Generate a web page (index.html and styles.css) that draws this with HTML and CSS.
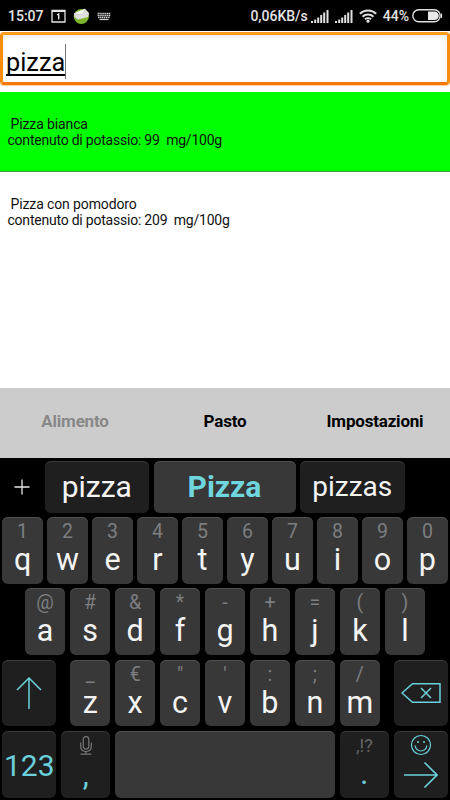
FILE: index.html
```html
<!DOCTYPE html>
<html lang="it">
<head>
    <meta charset="UTF-8">
    <meta name="viewport" content="width=device-width, initial-scale=1.0">
    <title>Potassio</title>
    <link rel="stylesheet" href="styles.css">
</head>
<body>
    <div class="status-bar">
        <span class="clock">15:07</span>
        <svg class="icon-calendar" width="15" height="14" viewBox="0 0 15 14">
            <path d="M1 1.500h13v11.500H1z" fill="none" stroke="#e4e4e4" stroke-width="1.300"/>
            <path d="M1 2h13" stroke="#e4e4e4" stroke-width="2"/>
            <path d="M6 6l1.700-1v5.500" fill="none" stroke="#e4e4e4" stroke-width="1.400"/>
        </svg>
        <svg class="icon-mail" width="17" height="17" viewBox="0 0 17 17">
            <circle cx="8.300" cy="8.500" r="7.600" fill="#7fb52c"/>
            <path d="M1 5.500L12 .8l4 4.200-.8 4L5 11.500 1.500 9z" fill="#dedede"/>
            <path d="M1 5.500l8.500 1.200L12 .8" fill="#f8f8f8" stroke="#c4c4c4" stroke-width=".6"/>
        </svg>
        <svg class="icon-keyboard" width="14" height="9" viewBox="0 0 14 9">
            <path d="M.5 1.500h13M.5 3.500h13M1 5.500h12" stroke="#d0d0d0" stroke-width="1.300" stroke-dasharray="1.400 .5"/>
            <path d="M2.500 7.500h9" stroke="#d0d0d0" stroke-width="1.200"/>
        </svg>

        <span class="speed">0,06KB/s</span>
        <svg class="icon-signal" width="18" height="13" viewBox="0 0 18 13">
            <path d="M0 13v-2h2v2zM3.200 13V9.500h2V13zM6.200 13V7.500h2V13zM9.200 13V5h2v8zM12.200 13V2.500h2V13zM15.500 13V0h2v13z" fill="#e0e0e0"/>
        </svg>
        <svg class="icon-signal second" width="18" height="13" viewBox="0 0 18 13">
            <path d="M0 13v-2h2v2zM3.200 13V9.500h2V13zM6.200 13V7.500h2V13zM9.200 13V5h2v8zM12.200 13V2.500h2V13zM15.500 13V0h2v13z" fill="#e0e0e0"/>
        </svg>
        <svg class="icon-wifi" width="18" height="14" viewBox="0 0 18 14">
            <path d="M.8 4.800a11.800 11.800 0 0 1 16.400 0M3.500 7.700a8 8 0 0 1 11 0M6 10.300a4.400 4.400 0 0 1 6 0" fill="none" stroke="#e0e0e0" stroke-width="1.900"/>
            <circle cx="9" cy="12.200" r="1.600" fill="#e0e0e0"/>
        </svg>
        <span class="percent">44%</span>
        <svg class="icon-battery" width="31" height="14" viewBox="0 0 31 14">
            <rect x=".8" y=".8" width="27.400" height="12" rx="6" fill="none" stroke="#e0e0e0" stroke-width="1.400"/>
            <path d="M16 2.500h6.500a4.300 4.300 0 0 1 0 8.600H16z" fill="#e8e8e8"/>
            <path d="M29.500 4.500v4.500" stroke="#e0e0e0" stroke-width="1.200"/>
        </svg>
    </div>

    <div class="search-box"><span class="search-text">pizza</span></div>

    <div class="results">
        <div class="result selected">
            <p class="name">Pizza bianca</p>
            <p>contenuto di potassio: 99&nbsp; mg/100g</p>
        </div>
        <div class="result">
            <p class="name">Pizza con pomodoro</p>
            <p>contenuto di potassio: 209&nbsp; mg/100g</p>
        </div>
    </div>

    <div class="tabs">
        <div class="tab disabled">Alimento</div>
        <div class="tab">Pasto</div>
        <div class="tab">Impostazioni</div>
    </div>

    <div class="keyboard">
        <div class="suggestions">
            <svg class="icon-plus" width="16" height="16" viewBox="0 0 16 16">
                <path d="M8 .5v15M.5 8h15" stroke="#e8e8e8" stroke-width="1.300"/>
            </svg>
            <div class="key dark suggestion">pizza</div>
            <div class="key suggestion best">Pizza</div>
            <div class="key dark suggestion small">pizzas</div>
        </div>

        <div class="row">
            <div class="key"><span class="hint">1</span>q</div>
            <div class="key"><span class="hint">2</span>w</div>
            <div class="key"><span class="hint">3</span>e</div>
            <div class="key"><span class="hint">4</span>r</div>
            <div class="key"><span class="hint">5</span>t</div>
            <div class="key"><span class="hint">6</span>y</div>
            <div class="key"><span class="hint">7</span>u</div>
            <div class="key"><span class="hint">8</span>i</div>
            <div class="key"><span class="hint">9</span>o</div>
            <div class="key"><span class="hint">0</span>p</div>
        </div>

        <div class="row">
            <div class="key"><span class="hint">@</span>a</div>
            <div class="key"><span class="hint">#</span>s</div>
            <div class="key"><span class="hint">&amp;</span>d</div>
            <div class="key"><span class="hint">*</span>f</div>
            <div class="key"><span class="hint">-</span>g</div>
            <div class="key"><span class="hint">+</span>h</div>
            <div class="key"><span class="hint">=</span>j</div>
            <div class="key"><span class="hint">(</span>k</div>
            <div class="key"><span class="hint">)</span>l</div>
        </div>

        <div class="row">
            <div class="key dark wide shift">
                <svg width="28" height="34" viewBox="0 0 28 34">
                    <path d="M14 33V2M2 14L14 2l12 12" fill="none" stroke="#6ad0dc" stroke-width="1.500"/>
                </svg>
            </div>
            <div class="key"><span class="hint">_</span>z</div>
            <div class="key"><span class="hint">€</span>x</div>
            <div class="key"><span class="hint">"</span>c</div>
            <div class="key"><span class="hint">'</span>v</div>
            <div class="key"><span class="hint">:</span>b</div>
            <div class="key"><span class="hint">;</span>n</div>
            <div class="key"><span class="hint">/</span>m</div>
            <div class="key dark wide delete">
                <svg width="40" height="20" viewBox="0 0 40 20">
                    <path d="M1 10L11.500.8H39v18.400H11.500z" fill="none" stroke="#6ad0dc" stroke-width="1.500"/>
                    <path d="M20 5l10 10M30 5L20 15" stroke="#6ad0dc" stroke-width="1.500"/>
                </svg>
            </div>
        </div>

        <div class="row">
            <div class="key dark wide numbers">123</div>
            <div class="key dark medium punct">
                <svg class="icon-mic" width="12" height="19" viewBox="0 0 12 19">
                    <rect x="3.200" y=".6" width="5.600" height="12.500" rx="2.800" fill="none" stroke="#777" stroke-width="1.200"/>
                    <path d="M.7 6.500v4.500a5.300 4.500 0 0 0 10.600 0V6.500M6 15.500V18M.5 18.200h11" fill="none" stroke="#777" stroke-width="1.200"/>
                </svg>
                <span>,</span>
            </div>
            <div class="key space"></div>
            <div class="key dark medium punct"><span class="hint">,!?</span><span>.</span></div>
            <div class="key dark wide enter">
                <svg width="22" height="22" viewBox="0 0 22 22">
                    <circle cx="11" cy="11" r="9.500" fill="none" stroke="#6ad0dc" stroke-width="1.200"/>
                    <path d="M5.200 11.500a5.800 5.500 0 0 0 11.600 0" fill="none" stroke="#6ad0dc" stroke-width="1.200"/>
                    <circle cx="8" cy="8" r="1" fill="#6ad0dc"/>
                    <circle cx="14" cy="8" r="1" fill="#6ad0dc"/>
                </svg>
                <svg width="34" height="28" viewBox="0 0 34 28">
                    <path d="M0 14h32.500M20.500 1.500L33 14 20.500 26.500" fill="none" stroke="#6ad0dc" stroke-width="1.600"/>
                </svg>
            </div>
        </div>
    </div>
</body>
</html>
```

FILE: styles.css
```css
body {
    margin: 0;
    width: 450px;
    height: 800px;
    display: flex;
    flex-direction: column;
    overflow: hidden;
    background-color: #ffffff;
    font-family: Roboto, 'Liberation Sans', sans-serif;
}

p {
    margin: 0;
}

/* Status bar */
.status-bar {
    box-sizing: border-box;
    height: 31px;
    padding: 1px 7px 0 8px;
    display: flex;
    align-items: center;
    background-color: #000000;
    color: #e4e4e4;
    font-size: 14px;
    font-weight: 500;
}

.status-bar svg {
    flex: none;
}

.clock {
    width: 43px;
}

.icon-mail {
    margin-left: 7px;
}

.icon-keyboard {
    margin-left: 7px;
}

.speed {
    margin-left: auto;
}

.icon-signal {
    margin-left: 3px;
}

.icon-signal.second {
    margin-left: 6px;
}

.icon-wifi {
    margin-left: 6px;
}

.percent {
    margin-left: 6px;
}

.icon-battery {
    margin-left: 3px;
}

/* Search field */
.search-box {
    box-sizing: border-box;
    height: 53px;
    margin-top: 1px;
    padding: 14px 3px 0;
    border: 3px solid #f98b0b;
    border-top-color: #ff9c1c;
    border-bottom-color: #f47a05;
    border-radius: 4px;
    box-shadow: inset 0 3px 4px #eeeeee, 0 1px 0 #ffd0a5;
}

.search-text {
    display: inline-block;
    height: 35px;
    margin-top: -5px;
    border-right: 1px solid #777777;  /* caret */
    font-size: 25.300px;
    line-height: 38px;
    text-decoration: underline;
    text-decoration-thickness: 1.500px;
    text-underline-offset: 3px;
    text-decoration-skip-ink: none;
}

/* Results */
.results {
    flex: 1;
    padding-top: 7px;
}

.result {
    box-sizing: border-box;
    height: 80px;
    padding: 24px 7.500px 0;
    font-size: 14px;
    line-height: 16px;
    letter-spacing: -0.220px;
    color: #111111;
}

.result.selected {
    background-color: #00ff00;
    border-bottom: 1px solid #3f9f3f;
}

.result .name {
    padding-left: 3px;
    letter-spacing: -0.120px;
}

/* Tabs */
.tabs {
    height: 70px;
    display: flex;
    background-color: #cccccc;
}

.tab {
    flex: 1;
    line-height: 66px;
    text-align: center;
    font-size: 17px;
    font-weight: 700;
    letter-spacing: -0.200px;
}

.tab.disabled {
    color: #888888;
}

/* Keyboard */
.keyboard {
    box-sizing: border-box;
    height: 342px;
    padding: 2.500px 2px;
    display: flex;
    flex-direction: column;
    gap: 4.500px;
    background-color: #000000;
}

.suggestions {
    height: 52px;
    display: flex;
    gap: 4.500px;
}

.icon-plus {
    margin: 18px 10px 0 12px;
}

.row {
    display: flex;
    justify-content: center;
    gap: 4.700px;
}

.key {
    box-sizing: border-box;
    width: 40.300px;
    height: 66.800px;
    padding-top: 3px;
    display: flex;
    flex-direction: column;
    align-items: center;
    border-radius: 6px;
    background-color: #383838;
    box-shadow: inset 0 1px 0 #505050;
    color: #f4f4f4;
    font-size: 30.500px;
    line-height: 34px;
}

.hint {
    color: #7c7e80;
    font-size: 19.500px;
    line-height: 23px;
}

.dark {
    background-color: #1f1f1f;
    box-shadow: inset 0 1px 0 #3a3a3a;
}

.suggestion {
    width: 104.500px;
    height: 52px;
    padding: 0;
    font-size: 30px;
    line-height: 52px;
}

.suggestion.best {
    width: 142px;
    color: #6fd6df;
    background-color: #383838;
    font-weight: 700;
}

.suggestion.small {
    font-size: 28px;
}

.wide {
    width: 54.500px;
}

.medium {
    width: 49px;
}

.space {
    width: 220.500px;
}

.shift {
    margin-right: 9px;
    padding-top: 16px;
}

.delete {
    margin-left: 9px;
    padding-top: 23px;
}

.numbers {
    padding: 0;
    color: #6ad0dc;
    font-size: 30px;
    line-height: 69px;
}

.punct {
    color: #6ad0dc;
}

.punct .icon-mic {
    margin: 2px 0 3px;
}

.punct .hint {
    color: #666666;
    font-size: 18px;
}

.enter {
    gap: 5px;
}
```
